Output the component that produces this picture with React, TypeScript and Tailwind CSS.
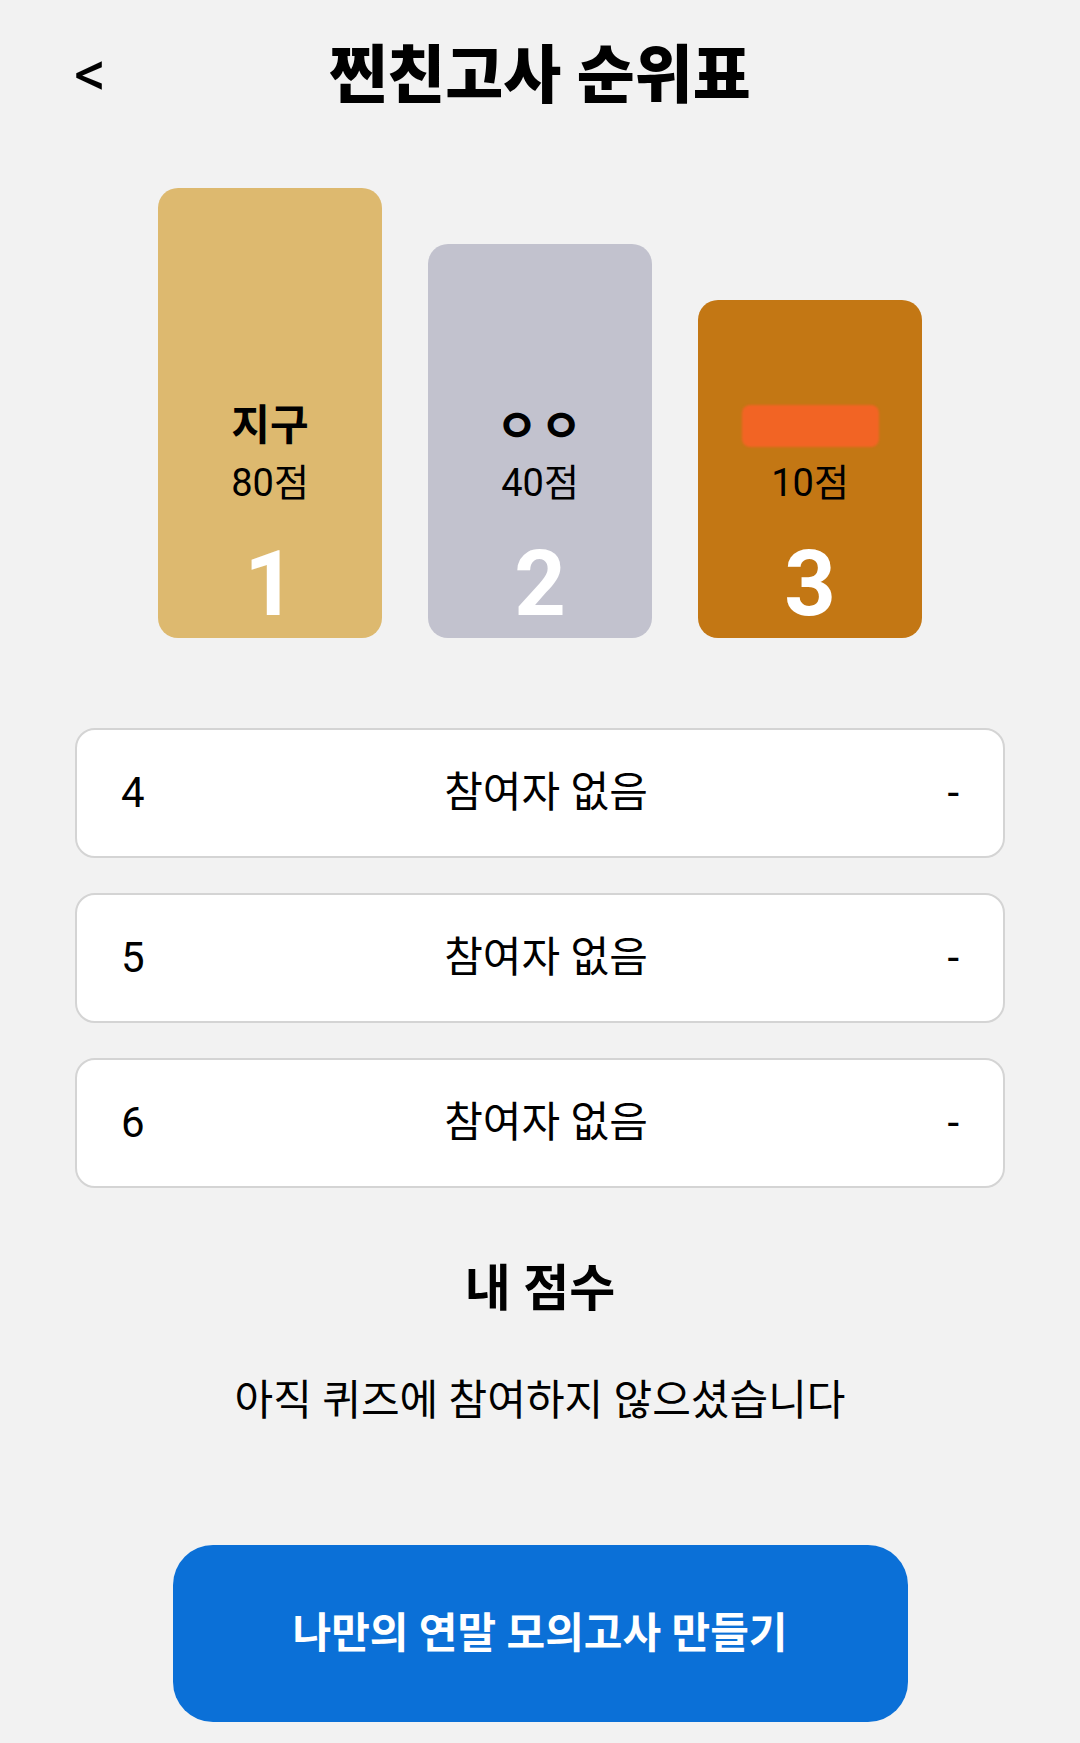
import React from 'react'

const podium = [
  { rank: 1, name: '지구', score: 80, h: 'h-[450px]', bg: 'bg-[#ddb96f]' },
  { rank: 2, name: 'ㅇㅇ', score: 40, h: 'h-[394px]', bg: 'bg-[#c2c2ce]' },
  { rank: 3, name: '', score: 10, h: 'h-[338px]', bg: 'bg-[#c37714]' },
]

const rest = [4, 5, 6]

export default function App() {
  return (
    <div className="min-h-[1743px] w-full bg-[#f2f2f2] font-[Roboto,'Noto_Sans_CJK_KR',sans-serif] text-black">
      {/* header */}
      <div className="flex h-[150px] items-center px-[74px]">
        <span className="w-[40px] text-[64px] leading-none font-normal">&lt;</span>
        <h1 className="flex-1 text-center text-[63px] leading-none font-black">찐친고사 순위표</h1>
        <span className="w-[40px]" />
      </div>

      {/* podium */}
      <div className="flex h-[488px] items-end justify-center gap-[46px]">
        {podium.map((p) => (
          <div
            key={p.rank}
            className={`flex w-[224px] flex-col items-center justify-end rounded-[20px] pb-[8px] ${p.h} ${p.bg}`}
          >
            <div className="flex h-[48px] items-center text-[42px] leading-[48px] font-bold">
              {p.name ? (
                <span className={p.rank === 2 ? 'text-[46px] tracking-[2px]' : ''}>{p.name}</span>
              ) : (
                <div className="h-[42px] w-[137px] rounded-[8px] bg-[#f26424] blur-[1px]" />
              )}
            </div>
            <div className="mt-[11px] text-[38px] leading-[44px]">{p.score}점</div>
            <div className="mt-[35px] text-[90px] leading-[90px] font-bold text-white">{p.rank}</div>
          </div>
        ))}
      </div>

      {/* rank list */}
      <div className="mt-[90px] flex flex-col gap-[35px] px-[75px]">
        {rest.map((n) => (
          <div
            key={n}
            className="flex h-[130px] items-center justify-between rounded-[20px] border-2 border-[#d4d4d4] bg-white px-[44px] text-[42px] leading-none"
          >
            <span>{n}</span>
            <span>참여자 없음</span>
            <span>-</span>
          </div>
        ))}
      </div>

      {/* my score */}
      <div className="mt-[72px] flex flex-col items-center">
        <h2 className="text-[50px] leading-[58px] font-bold">내 점수</h2>
        <p className="mt-[58px] text-[42px] leading-[50px]">아직 퀴즈에 참여하지 않으셨습니다</p>
        <button className="mt-[119px] flex h-[177px] w-[735px] items-center justify-center rounded-[40px] bg-[#0b70d7] text-[42px] font-bold text-white">
          나만의 연말 모의고사 만들기
        </button>
      </div>
    </div>
  )
}
